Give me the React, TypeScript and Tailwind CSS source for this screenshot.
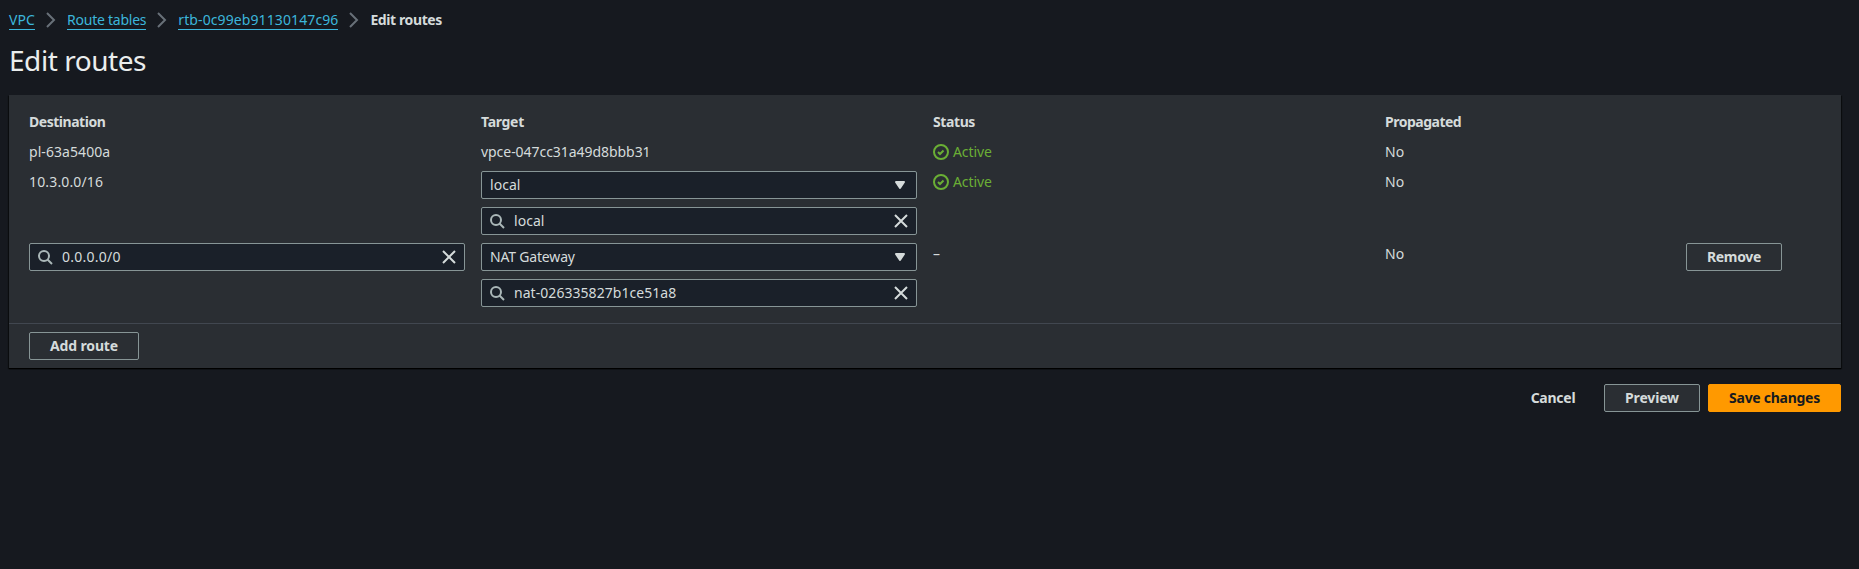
import type { ReactNode } from 'react';

const iconBase = 'size-4 shrink-0 fill-none stroke-2';

function ChevronIcon() {
  return (
    <svg viewBox="0 0 16 16" className={`${iconBase} mx-2 stroke-[#687078]`}>
      <path d="m4 1 7 7-7 7" />
    </svg>
  );
}

function SearchIcon() {
  return (
    <svg viewBox="0 0 16 16" className={`${iconBase} stroke-[#aab7b8]`}>
      <circle cx="7" cy="7" r="5" />
      <path d="m15 15-4.5-4.5" />
    </svg>
  );
}

function CloseIcon() {
  return (
    <svg viewBox="0 0 16 16" className={`${iconBase} stroke-[#d5dbdb]`}>
      <path d="m2 2 12 12M14 2 2 14" />
    </svg>
  );
}

function CaretIcon() {
  return (
    <svg viewBox="0 0 16 16" className="mr-px size-4 shrink-0 fill-[#d5dbdb] stroke-[#d5dbdb] stroke-2">
      <path d="M4 5h8l-4 6-4-6z" strokeLinejoin="round" />
    </svg>
  );
}

function CheckIcon() {
  return (
    <svg viewBox="0 0 16 16" className={`${iconBase} stroke-[#6aaf35]`}>
      <circle cx="8" cy="8" r="7" />
      <path d="m5 8 2 2 3.521-3.521" />
    </svg>
  );
}

function Crumb({ children, tracking }: { children: ReactNode; tracking: string }) {
  return (
    <a
      href="#"
      className={`mb-px h-[21px] border-b border-[#3cb6db] whitespace-nowrap text-[#3cb6db] ${tracking}`}
    >
      {children}
    </a>
  );
}

const fieldBox =
  'flex h-7 w-full items-center rounded-[2px] border border-[#879596] bg-[#1a2029] pr-[7px]';

function SearchField({ value, tracking }: { value: string; tracking: string }) {
  return (
    <div className={`${fieldBox} pl-[7px]`}>
      <SearchIcon />
      <span className={`ml-[9px] flex-1 ${tracking}`}>{value}</span>
      <CloseIcon />
    </div>
  );
}

function SelectField({ value, tracking }: { value: string; tracking: string }) {
  return (
    <div className={`${fieldBox} pl-2`}>
      <span className={`flex-1 ${tracking}`}>{value}</span>
      <CaretIcon />
    </div>
  );
}

function Active() {
  return (
    <div className="flex h-[22px] items-center gap-1 tracking-[-0.1px] text-[#6aaf35]">
      <CheckIcon />
      Active
    </div>
  );
}

function Button({ children, className }: { children: ReactNode; className: string }) {
  return (
    <button
      className={`flex h-7 shrink-0 items-center justify-center rounded-[2px] border font-bold whitespace-nowrap ${className}`}
    >
      {children}
    </button>
  );
}

const outline = 'border-[#879596] bg-[#2a2e33] text-[#d5dbdb]';
const row = 'grid grid-cols-[436px_436px_436px_285px_1fr] items-start gap-x-4';

export default function App() {
  return (
    <div className='min-h-[569px] bg-[#16191f] pr-[18px] pl-[9px] font-["Noto_Sans",sans-serif] text-[14px] leading-[22px] text-[#d5dbdb]'>
      <nav className="flex h-10 items-center">
        <Crumb tracking="tracking-[0.1px]">VPC</Crumb>
        <ChevronIcon />
        <Crumb tracking="tracking-[-0.24px]">Route tables</Crumb>
        <ChevronIcon />
        <Crumb tracking="tracking-[0.1px]">rtb-0c99eb91130147c96</Crumb>
        <ChevronIcon />
        <span className="font-bold tracking-[-0.4px]">Edit routes</span>
      </nav>

      <h1 className="mt-[2px] h-[53px] text-[28px] leading-[36px] tracking-[-0.45px] text-[#eaeded]">
        Edit routes
      </h1>

      <section className="h-[273px] bg-[#2a2e33] shadow-[0_1px_1px_0_#000,1px_1px_1px_0_rgba(0,0,0,0.4),-1px_1px_1px_0_rgba(0,0,0,0.4)]">
        <div className="flex h-[229px] flex-col gap-2 border-b border-[#414750] px-5 pt-4">
          <div className={`${row} font-bold`}>
            <span className="tracking-[-0.47px]">Destination</span>
            <span className="tracking-[-0.3px]">Target</span>
            <span className="tracking-[-0.4px]">Status</span>
            <span className="tracking-[-0.5px]">Propagated</span>
          </div>
          <div className={row}>
            <span className="tracking-[0.07px]">pl-63a5400a</span>
            <span className="tracking-[-0.05px]">vpce-047cc31a49d8bbb31</span>
            <Active />
            <span>No</span>
          </div>
          <div className={row}>
            <span className="tracking-[0.15px]">10.3.0.0/16</span>
            <div className="flex flex-col gap-2">
              <SelectField value="local" tracking="tracking-[0.05px]" />
              <SearchField value="local" tracking="tracking-[0.05px]" />
            </div>
            <Active />
            <span>No</span>
          </div>
          <div className={row}>
            <SearchField value="0.0.0.0/0" tracking="tracking-[0.25px]" />
            <div className="flex flex-col gap-2">
              <SelectField value="NAT Gateway" tracking="tracking-[-0.18px]" />
              <SearchField value="nat-026335827b1ce51a8" tracking="tracking-[0.05px]" />
            </div>
            <span>–</span>
            <span>No</span>
            <Button className={`${outline} w-24 tracking-[-0.33px]`}>Remove</Button>
          </div>
        </div>
        <div className="flex px-5 pt-2">
          <Button className={`${outline} w-[110px] tracking-[-0.15px]`}>Add route</Button>
        </div>
      </section>

      <footer className="mt-4 flex justify-end gap-2">
        <Button className="w-[86px] border-transparent tracking-[-0.25px] text-[#d5dbdb]">Cancel</Button>
        <Button className={`${outline} w-24 tracking-[-0.15px]`}>Preview</Button>
        <Button className="w-[133px] border-[#ff9900] bg-[#ff9900] tracking-[-0.28px] text-[#16191f]">
          Save changes
        </Button>
      </footer>
    </div>
  );
}
